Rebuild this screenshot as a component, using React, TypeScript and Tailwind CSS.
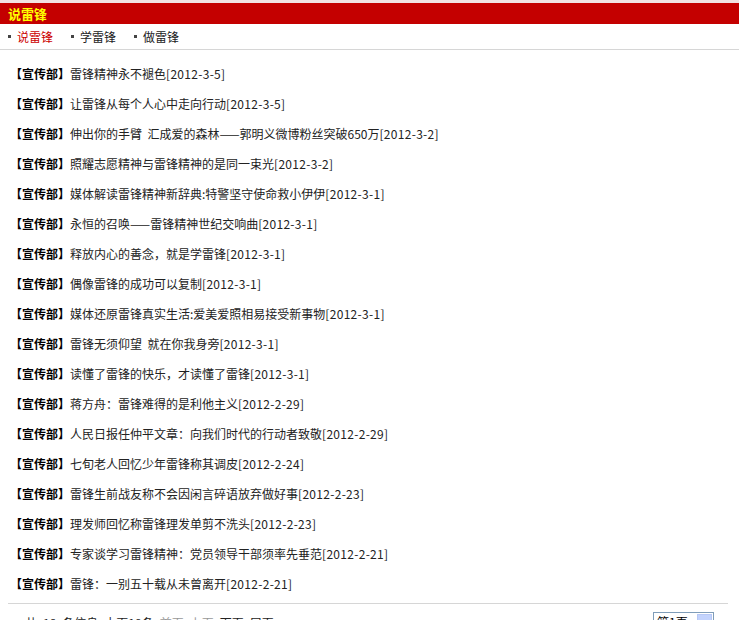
import React from 'react';

const items: [string, string][] = [
  ['雷锋精神永不褪色', '2012-3-5'],
  ['让雷锋从每个人心中走向行动', '2012-3-5'],
  ['伸出你的手臂  汇成爱的森林——郭明义微博粉丝突破650万', '2012-3-2'],
  ['照耀志愿精神与雷锋精神的是同一束光', '2012-3-2'],
  ['媒体解读雷锋精神新辞典:特警坚守使命救小伊伊', '2012-3-1'],
  ['永恒的召唤——雷锋精神世纪交响曲', '2012-3-1'],
  ['释放内心的善念，就是学雷锋', '2012-3-1'],
  ['偶像雷锋的成功可以复制', '2012-3-1'],
  ['媒体还原雷锋真实生活:爱美爱照相易接受新事物', '2012-3-1'],
  ['雷锋无须仰望  就在你我身旁', '2012-3-1'],
  ['读懂了雷锋的快乐，才读懂了雷锋', '2012-3-1'],
  ['蒋方舟：雷锋难得的是利他主义', '2012-2-29'],
  ['人民日报任仲平文章：向我们时代的行动者致敬', '2012-2-29'],
  ['七旬老人回忆少年雷锋称其调皮', '2012-2-24'],
  ['雷锋生前战友称不会因闲言碎语放弃做好事', '2012-2-23'],
  ['理发师回忆称雷锋理发单剪不洗头', '2012-2-23'],
  ['专家谈学习雷锋精神：党员领导干部须率先垂范', '2012-2-21'],
  ['雷锋：一别五十载从未曾离开', '2012-2-21'],
];

const tabs = ['说雷锋', '学雷锋', '做雷锋'];

export default function App() {
  return (
    <div
      className="w-[739px] h-[620px] overflow-hidden bg-white text-[12px] text-[#333]"
      style={{ fontFamily: '"Noto Sans CJK SC", "Liberation Sans", sans-serif' }}
    >
      <div className="h-[3px] bg-[#f2e2e2]" />
      <div className="h-[21px] bg-[#c40000] flex items-center pl-[8px]">
        <span className="text-[#ffff00] font-bold text-[13px] leading-none">说雷锋</span>
      </div>
      <div className="h-[26px] flex items-center pl-[8px] border-b border-[#d6d6d6]">
        {tabs.map((t, i) => (
          <div key={t} className="flex items-center w-[63px]">
            <span className="w-[3px] h-[3px] bg-[#444] mr-[6px]" />
            <span className={i === 0 ? 'text-[#cc0000]' : 'text-[#222]'}>{t}</span>
          </div>
        ))}
      </div>
      <ul className="pt-[9px] pl-[10px]">
        {items.map(([title, date], i) => (
          <li key={i} className="h-[30px] flex items-center whitespace-pre">
            <span className="font-bold text-black">【宣传部】</span>
            <span className="text-[#222]">{title}</span>
            <span className="text-[#222] tracking-[0.3px]">[{date}]</span>
          </li>
        ))}
      </ul>
      <div className="ml-[8px] mr-[11px] mt-[4px] border-t border-[#d6d6d6]" />
      <div className="flex items-start justify-between pl-[25px] pr-[25px] pt-[8px]">
        <div className="flex gap-[6px] text-[#222] pt-[2px]">
          <span>共</span>
          <span>18</span>
          <span>条信息</span>
          <span>本页18条</span>
          <span className="text-[#999]">首页</span>
          <span className="text-[#999]">上页</span>
          <span>下页</span>
          <span>尾页</span>
        </div>
        <div className="w-[61px] h-[20px] border border-[#7f9db9] flex items-center justify-between pl-[3px] pr-[1px]">
          <span className="text-black">第1页</span>
          <span className="w-[15px] h-[16px] bg-[#c3d3fd] border border-[#b7c8f5]" />
        </div>
      </div>
    </div>
  );
}
